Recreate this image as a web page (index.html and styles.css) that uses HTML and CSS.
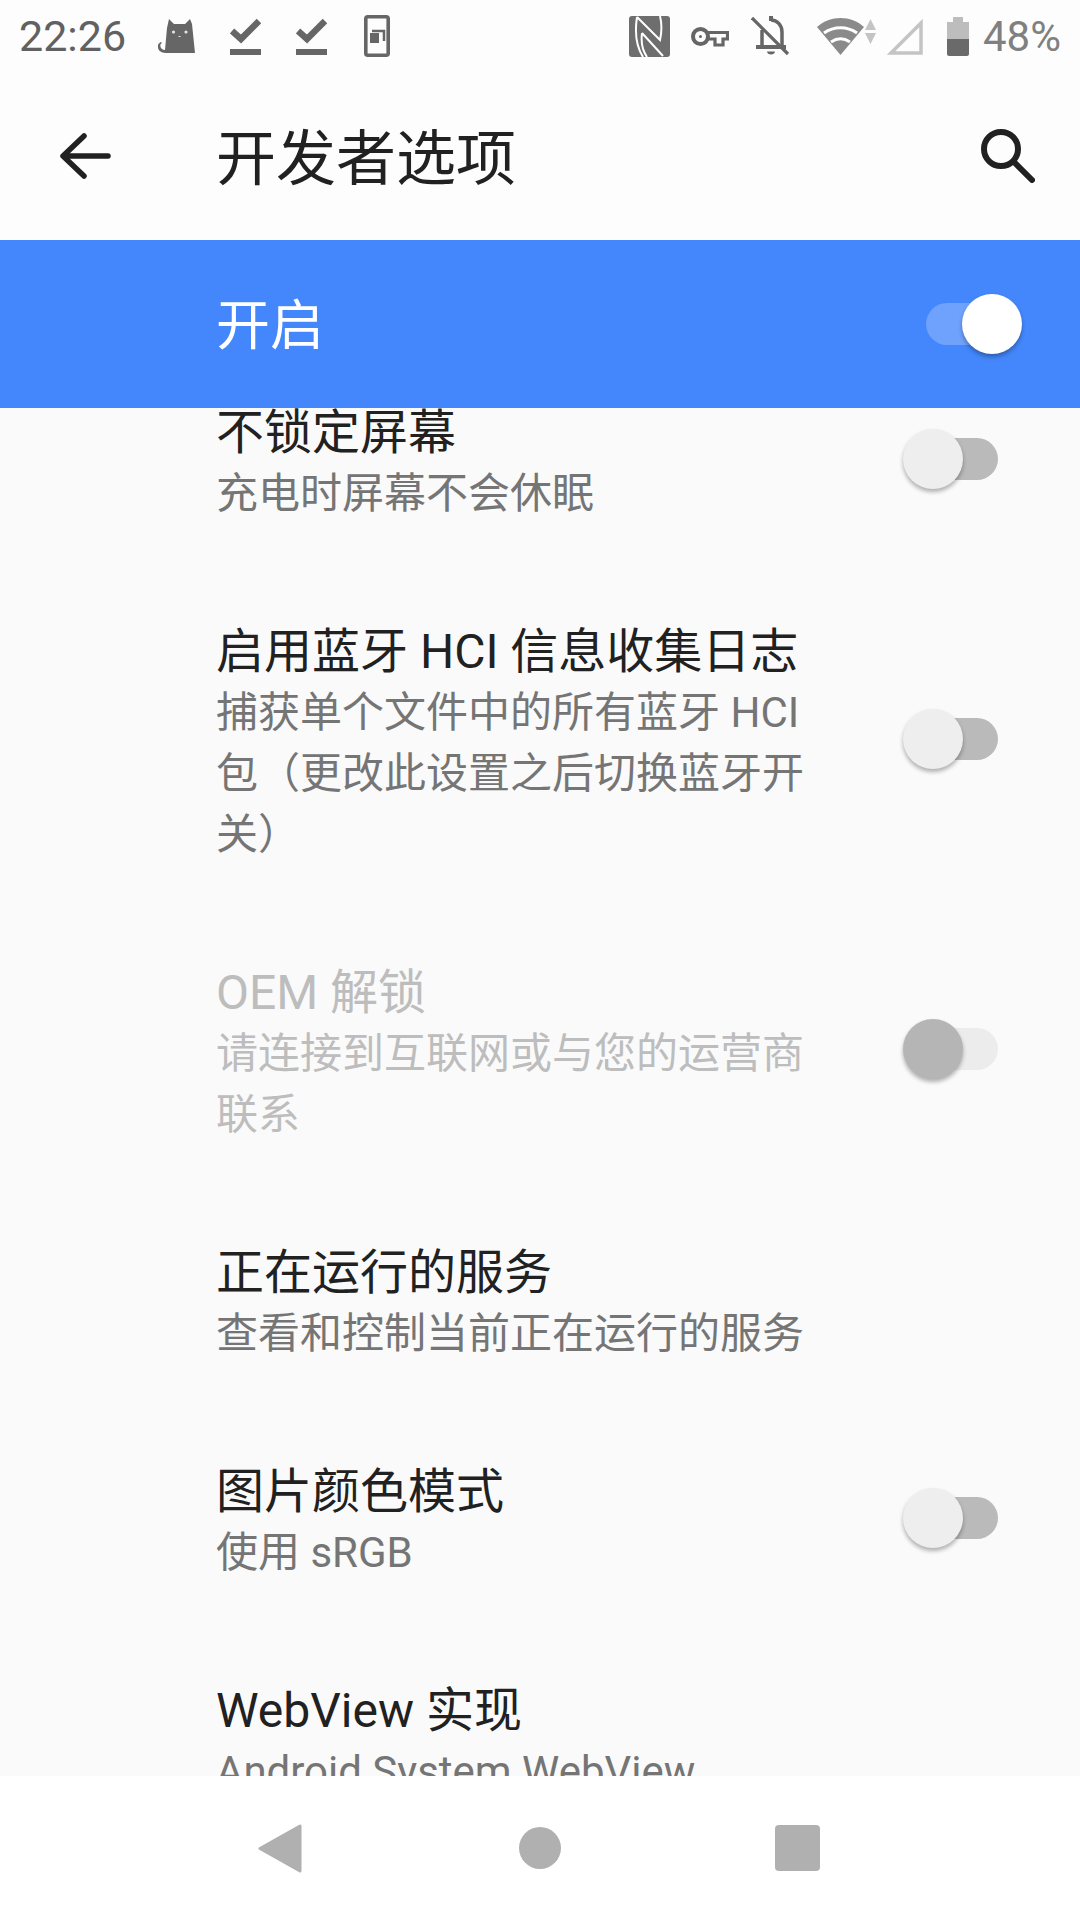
FILE: index.html
```html
<!DOCTYPE html>
<html>
<head>
	<meta http-equiv="Content-Type" content="text/html; charset=utf-8">
	<title>开发者选项</title>
	<link rel="stylesheet" href="styles.css">
</head>
<body>
<div class="page">

	<div class="status">
		<div class="status-left">
			<span class="time">22:26</span>
			<svg class="ic-cat" viewBox="0 0 37 35"><path d="M11 0l5 5h11l5-5 2 5 3 29H9c-4 0-8-1-9-5-1-3 1-5 3-6l1 1c-2 1-2 3-1 5 1 1 2 2 4 2l2-22z" fill="#666"/><circle cx="15.500" cy="13" r="1.600" fill="#e4e4e4"/><circle cx="28" cy="13" r="1.600" fill="#e4e4e4"/><rect x="20.500" y="17" width="2" height="1" fill="#e4e4e4"/></svg>
			<svg class="ic-check" viewBox="0 0 31 37"><path d="M2 13l9 8L29 3" fill="none" stroke="#666" stroke-width="6.500"/><rect y="31" width="31" height="6" fill="#666"/></svg>
			<svg class="ic-check" viewBox="0 0 31 37"><path d="M2 13l9 8L29 3" fill="none" stroke="#666" stroke-width="6.500"/><rect y="31" width="31" height="6" fill="#666"/></svg>
			<svg class="ic-phone" viewBox="0 0 26 42"><rect x="1.800" y="1.800" width="22.400" height="38.400" rx="2" fill="none" stroke="#666" stroke-width="3.600"/><rect x="6" y="18" width="9" height="10" fill="#666"/><path d="M8 16h12v10" fill="none" stroke="#666" stroke-width="2.500"/></svg>
		</div>
		<div class="status-right">
			<svg class="ic-nfc" viewBox="0 0 41 41"><rect width="41" height="41" rx="3" fill="#6e6e6e"/><path d="M8 1C6 14 7 30 14 41M8 1l23 23C33 15 33 8 31 0M13 17l21 23M13 17C12 25 13 34 18 41" fill="none" stroke="#fff" stroke-width="2"/></svg>
			<svg class="ic-key" viewBox="0 0 38 21"><circle cx="9.500" cy="10.500" r="7.500" fill="none" stroke="#666" stroke-width="4"/><circle cx="9.500" cy="10.500" r="1.500" fill="#666"/><path d="M17 6.500h19.500v6.500h-4.500v6h-8v-6h-7" fill="none" stroke="#666" stroke-width="3.200"/></svg>
			<svg class="ic-bell" viewBox="0 0 39 40"><path d="M20 4c6 0 11 5 11 12v14M11 14v16" fill="none" stroke="#666" stroke-width="3.500"/><path d="M5 29h30v4H5zM16 35.500h8c0 2-2 3-4 3s-4-1-4-3zM18 0h4v5h-4z" fill="#666"/><path d="M1 2l36 36" stroke="#666" stroke-width="3.200"/></svg>
			<div class="wifi">
				<svg class="ic-wifi" viewBox="0 0 47 37"><path d="M23.500 37L0 9C13-3 34-3 47 9z" fill="#8a8a8a"/><path d="M7 15c10-7 23-7 33 0M14 24c6-4 13-4 19 0" fill="none" stroke="#fff" stroke-width="3"/></svg>
				<svg class="ic-arrows" viewBox="0 0 11 25"><path d="M5.500 0L11 11H0zM0 14h11L5.500 25z" fill="#c4c4c4"/></svg>
			</div>
			<svg class="ic-signal" viewBox="0 0 37 37"><path d="M35 5v30H5z" fill="none" stroke="#c4c4c4" stroke-width="3.500"/></svg>
			<svg class="ic-batt" viewBox="0 0 22 39"><path d="M6 0h10v5h6v17H0V5h6z" fill="#bdbdbd"/><path d="M0 22h22v15c0 1-1 2-2 2H2c-1 0-2-1-2-2z" fill="#6a6a6a"/></svg>
			<span class="batt-text">48%</span>
		</div>
	</div>

	<div class="toolbar">
		<svg class="ic-back" viewBox="0 0 51 46"><path d="M24 3L3 23l21 20M4 23h44" fill="none" stroke="#212121" stroke-width="5.500" stroke-linecap="round" stroke-linejoin="round"/></svg>
		<h1 class="toolbar-title">开发者选项</h1>
		<svg class="ic-search" viewBox="0 0 54 54"><circle cx="20" cy="20" r="17" fill="none" stroke="#212121" stroke-width="6"/><path d="M33 33l18 18" stroke="#212121" stroke-width="6" stroke-linecap="round"/></svg>
	</div>

	<div class="master">
		<span class="master-label">开启</span>
		<div class="switch switch-on"><i class="thumb"></i></div>
	</div>

	<div class="list">
		<div class="list-scroll">
			<div class="row">
				<div class="row-text">
					<div class="row-title">不锁定屏幕</div>
					<div class="row-sub">充电时屏幕不会休眠</div>
				</div>
				<div class="switch"><i class="thumb"></i></div>
			</div>
			<div class="row">
				<div class="row-text">
					<div class="row-title">启用蓝牙 HCI 信息收集日志</div>
					<div class="row-sub">捕获单个文件中的所有蓝牙 HCI 包（更改此设置之后切换蓝牙开关）</div>
				</div>
				<div class="switch"><i class="thumb"></i></div>
			</div>
			<div class="row row-disabled">
				<div class="row-text">
					<div class="row-title">OEM 解锁</div>
					<div class="row-sub">请连接到互联网或与您的运营商联系</div>
				</div>
				<div class="switch"><i class="thumb"></i></div>
			</div>
			<div class="row">
				<div class="row-text">
					<div class="row-title">正在运行的服务</div>
					<div class="row-sub">查看和控制当前正在运行的服务</div>
				</div>
			</div>
			<div class="row">
				<div class="row-text">
					<div class="row-title">图片颜色模式</div>
					<div class="row-sub">使用 sRGB</div>
				</div>
				<div class="switch"><i class="thumb"></i></div>
			</div>
			<div class="row">
				<div class="row-text">
					<div class="row-title">WebView 实现</div>
					<div class="row-sub">Android System WebView</div>
				</div>
			</div>
		</div>
	</div>

	<div class="navbar">
		<svg class="ic-navback" viewBox="0 0 44 49"><path d="M42 2v45L2 24.500z" fill="#b0b0b0" stroke="#b0b0b0" stroke-width="3" stroke-linejoin="round"/></svg>
		<span class="nav-home"></span>
		<span class="nav-recent"></span>
	</div>

</div>
</body>
</html>
```

FILE: styles.css
```css
* {padding: 0; margin: 0; box-sizing: border-box;}
html, body {width: 1080px; height: 1920px; overflow: hidden;}
body {background: #fafafa; font-family: Roboto, "Noto Sans CJK SC", sans-serif;}
svg {display: block; flex: none;}

.page {display: flex; flex-direction: column; height: 1920px;}

/* status bar */
.status {display: flex; justify-content: space-between; align-items: center; height: 72px; padding: 0 19px; background: #fdfdfd;}
.status-left, .status-right {display: flex; align-items: center;}
.time {font-size: 43px; color: #616161; width: 139px;}
.ic-cat {width: 37px; height: 35px;}
.ic-check {width: 31px; height: 37px; margin-left: 35px;}
.ic-phone {width: 26px; height: 42px; margin-left: 37px;}
.ic-nfc {width: 41px; height: 41px;}
.ic-key {width: 38px; height: 21px; margin-left: 21px;}
.ic-bell {width: 39px; height: 40px; margin-left: 22px;}
.wifi {display: flex; align-items: flex-start; margin-left: 27px;}
.ic-wifi {width: 47px; height: 37px;}
.ic-arrows {width: 11px; height: 25px; margin: 1px 0 0 1px;}
.ic-signal {width: 37px; height: 37px; margin-left: 10px;}
.ic-batt {width: 22px; height: 39px; margin-left: 24px;}
.batt-text {font-size: 42px; color: #808080; margin-left: 14px;}

/* toolbar */
.toolbar {display: flex; align-items: center; height: 168px; padding: 0 45px 0 60px; background: #fdfdfd;}
.ic-back {width: 51px; height: 46px;}
.toolbar-title {flex: 1; margin: 0 0 6px 105px; font-size: 60px; font-weight: 400; color: #212121;}
.ic-search {width: 54px; height: 54px;}

/* master switch */
.master {display: flex; justify-content: space-between; align-items: center; height: 168px; padding: 0 78px 0 216px; background: #4487fc;}
.master-label {font-size: 54px; margin-bottom: 6px; color: #fff;}

/* switch */
.switch {position: relative; flex: none; width: 76px; height: 42px; margin-bottom: 10px; border-radius: 21px; background: #bababa;}
.thumb {position: absolute; left: -19px; top: -9px; width: 60px; height: 60px; border-radius: 50%; background: #eeeeee; box-shadow: 0 3px 4px rgba(0,0,0,.3);}
.switch-on {margin-bottom: 0; background: #6fa2fd;}
.switch-on .thumb {left: auto; right: -20px; background: #fff;}

/* list */
.list {flex: 1; overflow: hidden; background: #fafafa;}
.list-scroll {margin-top: -54px;}
.row {display: flex; justify-content: space-between; align-items: center; padding: 48px 82px 48px 216px;}
.row-text {width: 600px;}
.row-title {font-size: 48px; line-height: 62px; color: #212121;}
.row-sub {margin-top: -1px; padding-bottom: 1px; font-size: 42px; line-height: 61px; color: #757575;}
.row-disabled .row-title, .row-disabled .row-sub {color: #bdbdbd;}
.row-disabled .switch {background: #ececec;}
.row-disabled .thumb {background: #b5b5b5;}

/* nav bar */
.navbar {height: 144px; background: #fff; display: flex; justify-content: center; align-items: center;}
.ic-navback {width: 44px; height: 49px; margin: 0 217px 0 -2px;}
.nav-home {width: 42px; height: 42px; border-radius: 50%; background: #b0b0b0; margin-right: 214px;}
.nav-recent {width: 45px; height: 46px; border-radius: 4px; background: #b0b0b0;}
```
